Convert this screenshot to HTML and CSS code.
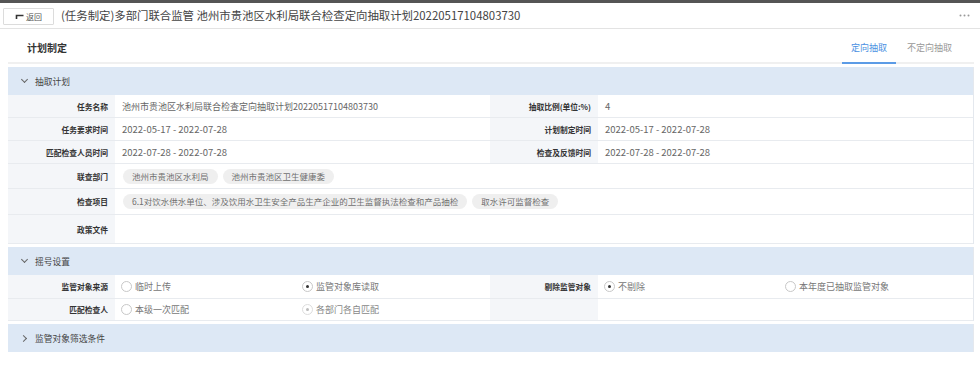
FILE: index.html
```html
<!DOCTYPE html>
<html lang="zh-CN">
<head>
<meta charset="utf-8">
<title>计划制定</title>
<link rel="stylesheet" href="styles.css">
</head>
<body>
<div class="topbar"></div>
<header class="header">
  <button class="back-btn"><svg class="back-icon" width="9" height="6" viewBox="0 0 9 6"><path d="M1.5 5 V1.5 H8.5" fill="none" stroke="#333" stroke-width="1.6"/></svg><span>返回</span></button>
  <div class="title">(任务制定)多部门联合监管 池州市贵池区水利局联合检查定向抽取计划20220517104803730</div>
  <svg class="more" width="11" height="3" viewBox="0 0 11 3"><circle cx="1.5" cy="1.5" r="1" fill="#999"/><circle cx="5.5" cy="1.5" r="1" fill="#999"/><circle cx="9.5" cy="1.5" r="1" fill="#999"/></svg>
</header>
<main class="main">
  <div class="plan-head">
    <div class="plan-title">计划制定</div>
    <div class="tabs">
      <div class="tab active">定向抽取</div>
      <div class="tab">不定向抽取</div>
    </div>
  </div>

  <section class="section">
    <div class="sec-head"><span class="chev down"></span>抽取计划</div>
    <div class="grid grid-plan">
      <div class="lbl">任务名称</div><div class="val cjk">池州市贵池区水利局联合检查定向抽取计划20220517104803730</div>
      <div class="lbl">抽取比例(单位:%)</div><div class="val">4</div>

      <div class="lbl">任务要求时间</div><div class="val">2022-05-17 - 2022-07-28</div>
      <div class="lbl">计划制定时间</div><div class="val">2022-05-17 - 2022-07-28</div>

      <div class="lbl">匹配检查人员时间</div><div class="val">2022-07-28 - 2022-07-28</div>
      <div class="lbl">检查及反馈时间</div><div class="val">2022-07-28 - 2022-07-28</div>

      <div class="lbl">联查部门</div>
      <div class="val span3 tags"><span class="tag">池州市贵池区水利局</span><span class="tag">池州市贵池区卫生健康委</span></div>

      <div class="lbl">检查项目</div>
      <div class="val span3 tags"><span class="tag">6.1对饮水供水单位、涉及饮用水卫生安全产品生产企业的卫生监督执法检查和产品抽检</span><span class="tag">取水许可监督检查</span></div>

      <div class="lbl">政策文件</div>
      <div class="val span3"></div>
    </div>
  </section>

  <section class="section">
    <div class="sec-head"><span class="chev down"></span>摇号设置</div>
    <div class="grid grid-lottery">
      <div class="lbl">监管对象来源</div>
      <div class="val radios">
        <label class="radio"><span class="circle"></span>临时上传</label>
        <label class="radio"><span class="circle checked"></span>监管对象库读取</label>
      </div>
      <div class="lbl">剔除监管对象</div>
      <div class="val radios">
        <label class="radio"><span class="circle checked"></span>不剔除</label>
        <label class="radio"><span class="circle"></span>本年度已抽取监管对象</label>
      </div>

      <div class="lbl">匹配检查人</div>
      <div class="val radios">
        <label class="radio"><span class="circle"></span>本级一次匹配</label>
        <label class="radio disabled"><span class="circle checked"></span>各部门各自匹配</label>
      </div>
      <div class="lbl"></div>
      <div class="val"></div>
    </div>
  </section>

  <section class="section">
    <div class="sec-head"><span class="chev right"></span>监管对象筛选条件</div>
  </section>
</main>
</body>
</html>
```

FILE: styles.css
```css
* { box-sizing: border-box; }
html, body { margin: 0; padding: 0; background: #fff; }
body {
  font-family: "Noto Sans CJK SC", "Noto Sans", sans-serif;
  color: #333;
  width: 980px;
}
.topbar { height: 3px; background: #555; }
.header {
  height: 26px;
  display: flex;
  align-items: center;
  padding: 0 3px;
  border-bottom: 1px solid #e3e3e3;
}
.back-btn {
  width: 51px;
  height: 17px;
  border: 1px solid #dcdcdc;
  background: #fff;
  border-radius: 1px;
  display: flex;
  align-items: center;
  justify-content: center;
  gap: 2px;
  font-family: inherit;
  font-size: 8px;
  color: #555;
  padding: 0;
  margin-top: 1px;
}
.back-icon { display: block; margin-top: 1px; }
.title {
  margin-left: 7px;
  font-size: 11.4px;
  color: #444;
  white-space: nowrap;
  margin-top: -1px;
}
.more {
  margin-left: auto;
  margin-right: 7px;
  display: block;
}
.main { padding: 0 6px 0 8px; }
.plan-head {
  height: 35px;
  padding-top: 3px;
  display: flex;
  align-items: stretch;
  justify-content: space-between;
  border-bottom: 2px solid #f0f0f0;
}
.plan-title {
  padding-left: 19px;
  font-size: 10px;
  font-weight: bold;
  color: #333;
  display: flex;
  align-items: center;
}
.tabs { display: flex; margin-right: 13px; }
.tab {
  padding: 0 9px;
  margin-left: 2px;
  font-size: 9px;
  color: #999;
  display: flex;
  align-items: center;
  margin-bottom: -2px;
  border-bottom: 2px solid transparent;
}
.tab.active { color: #4a90e2; border-bottom-color: #5b9be6; }

.section { margin-top: 3px; border-right: 1px solid #e4e8ee; }
.sec-head {
  height: 28px;
  background: #dde8f5;
  display: flex;
  align-items: center;
  padding-left: 14px;
  font-size: 8.75px;
  color: #444;
}
.chev {
  width: 5px;
  height: 5px;
  border-right: 1px solid #666;
  border-bottom: 1px solid #666;
  margin-right: 8px;
}
.chev.down { transform: rotate(45deg); margin-top: -3px; }
.chev.right { transform: rotate(-45deg); margin-left: -1px; margin-right: 9px; }

.grid {
  display: grid;
  grid-template-columns: 107px 1fr 108px 1fr;
}
.grid-plan { grid-template-rows: 23px 23px 23px 25px 26px 29px; }
.grid-lottery { grid-template-rows: 24px 22px; }
.grid > div { border-bottom: 1px solid #e8ebef; display: flex; align-items: center; }
.lbl {
  background: #f4f6f9;
  justify-content: flex-end;
  padding-right: 7px;
  font-size: 7.75px;
  font-weight: bold;
  color: #333;
}
.val {
  padding-left: 7px;
  font-size: 9.5px;
  color: #666;
}
.val.cjk { font-size: 9px; }
.span3 { grid-column: span 3; }
.val.tags { padding-left: 8px; }
.tag {
  display: inline-block;
  height: 15px;
  line-height: 15px;
  padding: 0 9px;
  border-radius: 8px;
  background: #efefef;
  color: #6f6f6f;
  font-size: 8.5px;
  margin-right: 5px;
}
.val.radios {
  display: grid;
  grid-template-columns: 181px 1fr;
  padding-left: 6px;
}
.radio {
  display: flex;
  align-items: center;
  font-size: 9px;
  color: #777;
}
.circle {
  width: 11px;
  height: 11px;
  border: 1px solid #c8c8c8;
  border-radius: 50%;
  margin-right: 3px;
  background: #fff;
  position: relative;
}
.circle.checked::after {
  content: "";
  position: absolute;
  left: 3px; top: 3px;
  width: 3px; height: 3px;
  border-radius: 50%;
  background: #333;
}
.radio.disabled { color: #888; }
.radio.disabled .circle { border-color: #ddd; }
.radio.disabled .circle.checked::after { background: #bbb; }
```
